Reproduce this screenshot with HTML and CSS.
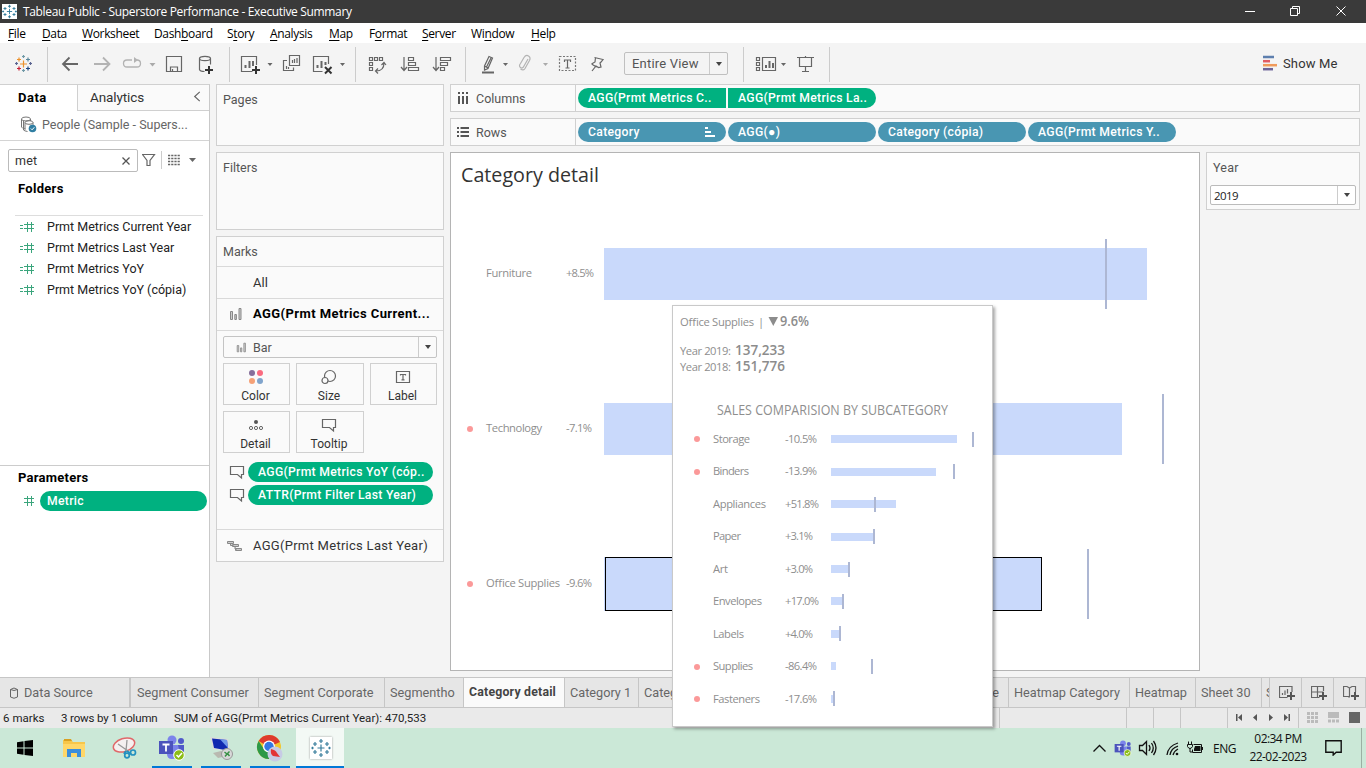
FILE: index.html
```html
<!DOCTYPE html>
<html lang="en">
<head>
<meta charset="utf-8">
<title>Tableau Public - Superstore Performance - Executive Summary</title>
<link rel="stylesheet" href="styles.css">
</head>
<body>
<svg class="defs" width="0" height="0">
  <defs>
    <symbol id="tip" viewBox="0 0 16 16"><path d="M1.5 2.5h13v8h-2v3.5l-4-3.500h-7z" fill="none" stroke="#666" stroke-width="1.2"/></symbol>
    <symbol id="hash" viewBox="0 0 16 12"><path d="M0 4.5h3M0 7.5h3M4 3.500h10M4 7.500h10M7.5 1v10M11.500 1v10" fill="none" stroke="#3aa57c"/></symbol>
    <symbol id="bars" viewBox="0 0 14 14"><path d="M1.5 4.5h2v8h-2zM5.8 7.5h1.6v5H5.8zM10 1.500h2v11h-2z" fill="#ccc" stroke="#888"/></symbol>
    <symbol id="plusmark" viewBox="0 0 10 10"><path d="M5 1v8M1 5h8" stroke="#555" stroke-width="2"/></symbol>
    <symbol id="teams" viewBox="0 0 28 26">
      <circle cx="14" cy="5" r="4.500" fill="#7b83eb"/><circle cx="23" cy="6" r="3" fill="#5059c9"/>
      <path d="M9 10h11v10q-1 4-6 4t-5-5z" fill="#7b83eb"/><path d="M20 10h6v8q-1 3-5 3z" fill="#5059c9"/>
      <rect x="1" y="6" width="14" height="13" fill="#4b53bc"/><path d="M4.500 9.500h7M8 9.500v7" stroke="#fff" stroke-width="1.800"/>
      <circle cx="21" cy="20" r="5.300" fill="#8cbd18" stroke="#fff"/><path d="M18.500 20l2 2 3.500-4" fill="none" stroke="#fff" stroke-width="1.500"/>
    </symbol>
    <symbol id="tabmark" viewBox="0 0 20 20"><path d="M10 6.500v7M6.500 10h7M10 1v4M8 3h4M10 15v4M8 17h4M4 4v4M2 6h4M16 4v4M14 6h4M4 12v4M2 14h4M16 12v4M14 14h4M1.500 8.700v2.600M.200 10h2.600M18.500 8.700v2.600M17.200 10h2.600" fill="none" stroke="currentColor" stroke-width="1.200"/></symbol>
  </defs>
</svg>
<div class="app">
  <header class="titlebar">
    <span class="logo"><svg width="15" height="15"><use href="#tabmark"/></svg></span>
    <span class="title">Tableau Public - Superstore Performance - Executive Summary</span>
    <svg class="winctl" width="116" height="23" viewBox="1240 0 116 23"><g fill="none" stroke="#fff"><path d="M1245 11.500h10M1290.500 8.500h7v7h-7zM1292.500 8.500v-2h7v7h-2M1336.500 6.500l9 9M1345.500 6.500l-9 9"/></g></svg>
  </header>
  <nav class="menubar">
    <span><u>F</u>ile</span><span><u>D</u>ata</span><span><u>W</u>orksheet</span><span>Dash<u>b</u>oard</span><span>S<u>t</u>ory</span><span><u>A</u>nalysis</span><span><u>M</u>ap</span><span>F<u>o</u>rmat</span><span><u>S</u>erver</span><span>Wi<u>n</u>dow</span><span><u>H</u>elp</span>
  </nav>
  <div class="toolbar">
    <div class="group g1"><svg width="47" height="35" viewBox="0 47 47 35"><g fill="none" stroke-width="1.200">
      <path d="M20 64h7M23.500 60.500v7" stroke="#eb912c"/><path d="M17 59.500h4M19 57.500v4" stroke="#eb912c"/><path d="M17 68.500h4M19 66.500v4" stroke="#c72035"/><path d="M26 59.500h4M28 57.500v4" stroke="#59879b"/><path d="M26 68.500h4M28 66.500v4" stroke="#1f457e"/><path d="M22 56.500h3M23.500 55v3M22 70.500h3M23.500 69v3" stroke="#7099a6"/><path d="M15 63.500h3M16.500 62v3M29 63.500h3M30.500 62v3" stroke="#5b6591"/></g></svg></div>
    <div class="group g2"><svg width="182" height="35" viewBox="48 47 182 35"><g fill="none" stroke="#666" stroke-width="1.200">
      <path d="M78 64H63M69.500 57.500L63 64l6.500 6.500" stroke-width="1.800"/><path d="M94 64h15M103 57.500l6.500 6.500-6.500 6.500" stroke="#b3b3b3" stroke-width="1.800"/>
      <path d="M132 60h-5q-3.500 0-3.500 3.500t3.500 3.500h10q3.500 0 3.500-3.500T137 60" stroke="#b3b3b3" stroke-width="1.300"/><path d="M134 57v6l4-3z" fill="#b3b3b3" stroke="none"/>
      <path d="M149.500 63h6l-3 3.500z" fill="#aaa" stroke="none"/>
      <path d="M166.500 56.500h15v15h-15zM170.500 71.500v-4.500h7v4.500M172.500 69v2.500"/>
      <ellipse cx="205" cy="58.500" rx="5.500" ry="2.200"/><path d="M199.500 58.500v11q.500 2 5 2M210.500 58.500v6"/><path d="M209 66v8M205 70h8" stroke="#333" stroke-width="2"/></g></svg></div>
    <div class="group g3"><svg width="125" height="35" viewBox="230 47 125 35"><g fill="none" stroke="#666" stroke-width="1.200">
      <path d="M256.500 65v-8.500h-15v15h11"/><path d="M245.500 68v-3M249.500 68v-7M253 66v-5" stroke-width="2"/><path d="M256 66v8M252 70h8" stroke="#333" stroke-width="2"/><path d="M267.500 63h5l-2.500 3zM340 63h5l-2.500 3z" fill="#666" stroke="none"/>
      <path d="M289.500 55.500h10v10h-10zM287 60.500h-3.500v10h10v-3M292.500 63v-3M294.500 63v-4M297 63v-5M286.500 69v-3M288.500 69v-2"/>
      <path d="M328.500 64v-7.500h-15v15h9"/><path d="M317.500 68v-3M321.500 68v-7M325.500 65v-3" stroke-width="2"/><path d="M325 67l6.500 6.500M331.500 67l-6.500 6.500" stroke="#333" stroke-width="2"/></g></svg></div>
    <div class="group g4"><svg width="109" height="35" viewBox="356 47 109 35"><g fill="none" stroke="#666" stroke-width="1.200">
      <path d="M369.500 57.500h3v3h-3zM374.500 57.500h3v3h-3zM379.500 57.500h3v3h-3zM369.500 62.500h3v3h-3zM369.500 67.500h3v3h-3zM376 71q8 0 8-8M381.500 65l2.500-2.500 2 2.500M378 68.500l-2.500 2.500 2.500 2.500"/>
      <path d="M404 57v13M401 67l3 3.500 3-3.500M408.500 57.500h5v3h-5zM408.500 62.500h7v3h-7zM408.500 67.500h10v3h-10z"/>
      <path d="M436 57v13M433 67l3 3.500 3-3.500M440.500 57.500h10v3h-10zM440.500 62.500h7v3h-7zM440.500 67.500h4v3h-4z"/></g></svg></div>
    <div class="group g5"><svg width="158" height="35" viewBox="466 47 158 35"><g fill="none" stroke="#666" stroke-width="1.200">
      <path d="M489 56.500l3.500 1.500-4.500 10.500-3.500 1.500v-4zM484.500 66l3.500 2M491 58l-4.500 9"/><path d="M482 72.500h12" stroke-width="2"/><path d="M503 63h5l-2.500 3z" fill="#666" stroke="none"/>
      <path d="M528 59l-4 7q-1.500 3-3.500 1.500t0-4l3.500-6q2-3 4.500-1.500t1 4.500l-4.500 8q-1.500 2.500-4.500.500" stroke="#b3b3b3"/><path d="M543 63h5l-2.500 3z" fill="#aaa" stroke="none"/>
      <rect x="559.500" y="56.500" width="16" height="14" stroke-dasharray="2 1.500" stroke="#777"/><path d="M564.500 62v-2h6v2M567.500 60v8M565.500 68h4"/>
      <path d="M594.500 57.500l8.500 2-2 2.500-1 1 1 4-2.500.500-2.500-1.500-4 5M591.500 64l5 3M591.500 64l3.500-2 .500-4.500"/></g></svg>
      <div class="fitbox"><span>Entire View</span><i></i></div></div>
    <div class="group g6"><svg width="85" height="35" viewBox="744 47 85 35"><g fill="none" stroke="#666" stroke-width="1.200">
      <path d="M756.500 57.500h3v3h-3zM756.500 62.500h3v3h-3zM756.500 67.500h3v3h-3zM762.500 57.500h13v13h-13z"/><path d="M766 68v-3M769.500 68v-7M773 68v-5" stroke-width="2"/><path d="M781 63h5l-2.500 3z" fill="#666" stroke="none"/><path d="M797 57.500h17M799.500 57.500v9h12v-9M805.500 56v1M805.500 67v4M802 71.500h7"/></g></svg></div>
    <div class="showme"><svg width="16" height="16"><path d="M0 2h11" stroke="#5d7fae" stroke-width="2.500"/><path d="M0 6.200h7" stroke="#e15b64" stroke-width="2.500"/><path d="M0 10.200h14" stroke="#f09a5b" stroke-width="2.500"/><path d="M0 14.200h10" stroke="#6d6398" stroke-width="2.500"/></svg>Show Me</div>
  </div>
  <main class="main">
    <aside class="side">
      <div class="sidetabs"><b>Data</b><span>Analytics</span><svg width="8" height="12" viewBox="0 0 8 12"><path d="M7 1L1.500 6 7 11" fill="none" stroke="#666" stroke-width="1.300"/></svg></div>
      <div class="source"><svg width="17" height="17"><g fill="none" stroke="#777"><ellipse cx="6" cy="3" rx="4.500" ry="2"/><path d="M1.500 3v8q1 2 4 2M3.500 5v9q1 1 4 1.500M10.500 3v2"/><ellipse cx="9" cy="6.500" rx="4" ry="1.800"/><path d="M5 6.500v7M13 6.500v3"/></g><circle cx="12.500" cy="12.500" r="3.800" fill="#2f7ea2"/><path d="M10.800 12.500l1.300 1.300 2.200-2.500" fill="none" stroke="#fff"/></svg><span>People (Sample - Supers...</span></div>
      <div class="search"><div class="searchbox"><span>met</span><svg width="8" height="8"><path d="M.500.500l7 7M7.500.500l-7 7" stroke="#555" stroke-width="1.300"/></svg></div>
        <svg class="tools" width="58" height="20" viewBox="142 150 58 20"><path d="M142.500 154.500h12l-4.500 6v5h-3v-5z" fill="none" stroke="#666" stroke-width="1.200"/><path d="M161.500 151v18" stroke="#ccc"/><path d="M168 155.500h12M168 158.500h12M168 161.500h12M168 164.500h12" stroke="#666" stroke-width="1.400" stroke-dasharray="2.200 1"/><path d="M189 158h7l-3.500 4z" fill="#666"/></svg></div>
      <h3 class="folders">Folders</h3>
      <ul class="fields">
        <li><svg width="16" height="12"><use href="#hash"/></svg>Prmt Metrics Current Year</li>
        <li><svg width="16" height="12"><use href="#hash"/></svg>Prmt Metrics Last Year</li>
        <li><svg width="16" height="12"><use href="#hash"/></svg>Prmt Metrics YoY</li>
        <li><svg width="16" height="12"><use href="#hash"/></svg>Prmt Metrics YoY (cópia)</li>
      </ul>
      <section class="params"><h3>Parameters</h3><div class="param"><svg width="12" height="12"><path d="M1 3.500h10M1 7.500h10M4.500 1v10M8.500 1v10" stroke="#3aa57c"/></svg><span class="pill green">Metric</span></div></section>
    </aside>
    <div class="shelves">
      <section class="card pages">Pages</section>
      <section class="card filters">Filters</section>
      <section class="card marks">
        <div class="mhead">Marks</div>
        <div class="mrow"><span>All</span></div>
        <div class="mrow bold"><svg width="14" height="14"><use href="#bars"/></svg><span>AGG(Prmt Metrics Current...</span></div>
        <div class="mbody">
          <div class="marktype"><svg width="11" height="11"><use href="#bars"/></svg><span>Bar</span><i></i></div>
          <div class="markbtns">
            <div><svg width="16" height="16"><circle cx="4" cy="4" r="3" fill="#866f9b"/><circle cx="12" cy="4" r="3" fill="#fa6b80"/><circle cx="4" cy="12" r="3" fill="#f5a177"/><circle cx="12" cy="12" r="3" fill="#80a4cc"/></svg>Color</div>
            <div><svg width="16" height="16"><g fill="#fafafa" stroke="#666" stroke-width="1.200"><circle cx="9" cy="7" r="5.500"/><circle cx="4" cy="11.500" r="3"/></g></svg>Size</div>
            <div><svg width="16" height="16"><path d="M1.500 2.500h13v11h-13zM5.500 6.500v-1h5v1M8 5.500v5M6.500 10.800h3" fill="none" stroke="#666" stroke-width="1.200"/></svg>Label</div>
            <div><svg width="16" height="16"><circle cx="8" cy="5" r="2" fill="#555"/><g fill="none" stroke="#666"><circle cx="3" cy="11" r="1.600"/><circle cx="8" cy="11" r="1.600"/><circle cx="13" cy="11" r="1.600"/></g></svg>Detail</div>
            <div><svg width="16" height="16"><use href="#tip"/></svg>Tooltip</div>
          </div>
          <div class="markpill"><svg width="16" height="16"><use href="#tip"/></svg><span class="pill green">AGG(Prmt Metrics YoY (cóp..</span></div>
          <div class="markpill"><svg width="16" height="16"><use href="#tip"/></svg><span class="pill green">ATTR(Prmt Filter Last Year)</span></div>
        </div>
        <div class="mrow last"><svg width="16" height="12"><path d="M.500 1.500h6v2h-6zM5.500 4.500h6v2h-6zM8.500 8.500h6v2h-6zM3.500 3.500v2h3M8 6.500v2.500h2" fill="#ccc" stroke="#888"/></svg><span>AGG(Prmt Metrics Last Year)</span></div>
      </section>
    </div>
    <div class="work">
      <div class="shelf"><div class="slabel"><svg width="12" height="12"><path d="M2 0v2M6 0v2M10 0v2M2 4v8M6 4v8M10 4v8" stroke="#555" stroke-width="2"/></svg>Columns</div><span class="pill green joinr">AGG(Prmt Metrics C..</span><span class="pill green joinl">AGG(Prmt Metrics La..</span></div>
      <div class="shelf"><div class="slabel"><svg width="12" height="12"><path d="M0 2h2M0 6h2M0 10h2M3.500 2H12M3.500 6H12M3.500 10H12" stroke="#555" stroke-width="1.800"/></svg>Rows</div><span class="pill blue">Category<svg width="10" height="10"><path d="M0 1h3M0 5h6M0 9h10" stroke="#fff" stroke-width="1.800"/></svg></span><span class="pill blue">AGG(●)</span><span class="pill blue">Category (cópia)</span><span class="pill blue">AGG(Prmt Metrics Y..</span></div>
      <div class="canvas">
        <section class="view"><svg class="chart" width="748" height="517" viewBox="451 153 748 517">
          <text class="ctitle" x="461" y="182" textLength="138" lengthAdjust="spacingAndGlyphs">Category detail</text>
          <g class="bar"><rect x="604" y="248" width="543" height="52"/><rect x="604" y="403" width="518" height="52"/><rect x="604" y="557" width="437" height="54"/></g>
          <rect x="605.500" y="557.500" width="436" height="53" fill="none" stroke="#000"/>
          <path class="refline" d="M1106 239v70M1163 394v70M1088 549v70"/>
          <g class="dot"><circle cx="470" cy="429" r="3"/><circle cx="470" cy="584" r="3"/></g>
          <g class="lab"><text x="486" y="277" textLength="46">Furniture</text><text x="566" y="277" textLength="28">+8.5%</text><text x="486" y="432" textLength="56">Technology</text><text x="566" y="432" textLength="26">-7.1%</text><text x="486" y="587" textLength="74">Office Supplies</text><text x="566" y="587" textLength="26">-9.6%</text></g>
        </svg></section>
        <aside class="card year"><div>Year</div><div class="yearsel"><span>2019</span><i></i></div></aside>
      </div>
    </div>
  </main>
  <div class="tabs">
    <div class="tab t0"><svg width="8" height="12"><path d="M.500 2.500q3.500-3 7 0v7.500q-3.500 2.500-7 0zM.500 2.500q3.500 2 7 0" fill="none" stroke="#666"/></svg>Data Source</div>
    <div class="tab t1">Segment Consumer</div><div class="tab t2">Segment Corporate</div><div class="tab t3">Segmentho</div><div class="tab active">Category detail</div><div class="tab t5">Category 1</div><div class="tab t6"><span>Categ</span><span>e</span></div><div class="tab t7">Heatmap Category</div><div class="tab t8">Heatmap</div><div class="tab t9">Sheet 30</div><div class="tab t10">S</div>
    <div class="tab add"><svg width="16" height="16"><path d="M13 7V1.500H.500v11h8M3.500 10V8M6 10V5.500M8.500 8.500V4" fill="none" stroke="#666" stroke-width="1.200"/><use href="#plusmark" x="7" y="6" width="10" height="10"/></svg></div>
    <div class="tab add"><svg width="16" height="16"><path d="M12.500 6V1.500H.500v11h8M6.500 1.500v11M.500 7h12" fill="none" stroke="#666" stroke-width="1.200"/><use href="#plusmark" x="7" y="6" width="10" height="10"/></svg></div>
    <div class="tab add"><svg width="16" height="16"><path d="M6.500 3L4 1.500H.500v10h5l1 1M6.500 3v9M6.500 3L9 1.500h3.500V7" fill="none" stroke="#666" stroke-width="1.200"/><use href="#plusmark" x="7" y="6" width="10" height="10"/></svg></div>
  </div>
  <footer class="status"><span class="s1">6 marks</span><span class="s2">3 rows by 1 column</span><span class="s3">SUM of AGG(Prmt Metrics Current Year): 470,533</span>
    <svg class="statusnav" width="367" height="20" viewBox="999 708 367 20"><path d="M999.500 708v20M1126.500 708v20M1153.500 708v20M1180.500 708v20M1227.500 708v20M1298.500 708v20" stroke="#c6c6c6"/><path d="M1236 714h1.500v7h-1.500zM1242 714v7l-4-3.500zM1257 714v7l-4-3.500zM1269 714v7l4-3.500zM1284 714v7l4-3.500zM1288.500 714h1.500v7h-1.500z" fill="#555"/><path d="M1307 713.500h11M1307 717.500h11M1307 721.500h11" stroke="#bbb" stroke-width="3" stroke-dasharray="3 1"/><path d="M1328 712h11v6h-11zM1328 719.500h3v3h-3zM1332 719.500h3v3h-3zM1336 719.500h3v3h-3z" fill="#bbb"/><path d="M1349 712h11v11h-11z" fill="#666"/></svg></footer>
  <div class="taskbar">
    <div class="tb"><svg width="16" height="16"><path d="M0 2.300L6.500 1.300V7.500H0zM7.500 1.100L16 0v7.500H7.500zM0 8.500h6.500v6.200L0 13.700zM7.500 8.500H16V16l-8.500-1.100z"/></svg></div>
    <div class="tb"><svg width="22" height="19"><path d="M0 1h8l2 2h12v15H0z" fill="#f7c64a"/><path d="M1 0h7l1 2H1z" fill="#d9a021"/><path d="M0 5h22v13H0z" fill="#ffd768"/><path d="M4 10h14v8h-4v-4H8v4H4z" fill="#3b8edb"/></svg></div>
    <div class="tb snip"><svg width="25" height="22"><ellipse cx="12" cy="8" rx="11" ry="6.500" fill="#f5f0f0" stroke="#e0686a" stroke-width="1.500" transform="rotate(-18 12 8)"/><path d="M6 7l10 7M15 3l-1 11" stroke="#999" stroke-width="1.300"/><path d="M14 14l-2 3M15 14l4 3" stroke="#2491c0" stroke-width="2"/><circle cx="15" cy="18.500" r="2.300" fill="none" stroke="#2491c0" stroke-width="1.700"/><circle cx="21" cy="15.500" r="2.500" fill="none" stroke="#2491c0" stroke-width="1.700"/></svg></div>
    <div class="tb run"><svg width="28" height="26"><use href="#teams"/></svg></div>
    <div class="tb run"><svg width="25" height="26"><path d="M1 2l18 2 2 13L4 14z" fill="#dcdcdc"/><path d="M3 3.500l15 1.500 1 10.500L5 13z" fill="#1028b0"/><path d="M11 4.300l7 .700 1 8z" fill="#6f97ea"/><path d="M4 18l8-2 6 5-9 2z" fill="#b9b9b0"/><circle cx="18" cy="19" r="5.500" fill="#d8d8d8" stroke="#999"/><path d="M15.500 17l2.500 2-2 2.500M20.500 16.500l-2 2 2 2.500" fill="none" stroke="#389145" stroke-width="1.500"/></svg></div>
    <div class="tb run"><svg width="28" height="28"><circle cx="13" cy="13" r="12" fill="#f3c72f"/><path d="M13 13L2.600 7A12 12 0 0 1 24 8z" fill="#de3b2d"/><path d="M13 13v12A12 12 0 0 1 2.600 7l6 9z" fill="#2d9948"/><circle cx="13" cy="12.500" r="6" fill="#fff"/><circle cx="13" cy="12.500" r="4.700" fill="#3478e4"/><circle cx="19" cy="20" r="7.500" fill="#c7cbe5"/><path d="M15 15q5 1 6 4l3 4-7-1q-3-2-2-7" fill="#e23437"/></svg></div>
    <div class="tb run current"><span class="tabicon"><svg width="20" height="20"><use href="#tabmark"/></svg></span></div>
    <svg class="tray" width="123" height="40" viewBox="1090 728 123 40"><g fill="none" stroke="#111" stroke-width="1.300"><path d="M1093.500 751.500l6-6 6 6"/><path d="M1139.500 745.500h3l4-4v13l-4-4h-3zM1149 745q2 3 0 6M1151.500 743q3.500 5 0 10M1153.500 741q5 7 0 14"/><path d="M1167 755q1-9 11-12M1170 755q1-7 8-9M1173 755q1-4 5-6"/><circle cx="1177" cy="754" r="1.300" fill="#111" stroke="none"/></g><svg x="1114" y="740" width="18" height="17"><use href="#teams"/></svg><path d="M1193.500 744.500h8v8h-9v-3M1202.500 747v3" fill="none" stroke="#111"/><path d="M1195 746h5.500v5h-6.500v-2z" fill="#111"/><path d="M1188.500 741.500v3M1191.500 741.500v3M1187.500 744.500h5v2q-1 2-2.500 2t-2.500-2zM1190 748v4h2" stroke="#111" fill="none"/></svg>
    <span class="lang">ENG</span><div class="clock"><span>02:34 PM</span><span>22-02-2023</span></div>
    <svg class="note" width="17" height="16"><path d="M.800.800h15.400v11.400h-5l-3 2.800v-2.800h-7.400z" fill="none" stroke="#111" stroke-width="1.400"/></svg><i class="desk"></i>
  </div>
  <div class="tooltip"><svg class="chart" width="319" height="420" viewBox="673 306 319 420">
    <g class="lab"><text x="680" y="326" textLength="74">Office Supplies</text><text x="758" y="326">|</text><text x="680" y="355" textLength="51">Year 2019:</text><text x="680" y="371" textLength="51">Year 2018:</text></g>
    <path d="M768.500 317h9.500l-4.700 9z" fill="#8c8c8c"/>
    <g class="strong"><text x="780" y="326" textLength="29" lengthAdjust="spacingAndGlyphs">9.6%</text><text x="735" y="355" textLength="50" lengthAdjust="spacingAndGlyphs">137,233</text><text x="735" y="371" textLength="50" lengthAdjust="spacingAndGlyphs">151,776</text></g>
    <text class="sub" x="717" y="415" textLength="231" lengthAdjust="spacingAndGlyphs">SALES COMPARISION BY SUBCATEGORY</text>
    <g class="dot"><circle cx="697" cy="439" r="3"/><circle cx="697" cy="472" r="3"/><circle cx="697" cy="667" r="3"/><circle cx="697" cy="699" r="3"/></g>
    <g class="lab"><text x="713" y="443" textLength="37">Storage</text><text x="713" y="475" textLength="36">Binders</text><text x="713" y="508" textLength="53">Appliances</text><text x="713" y="540" textLength="28">Paper</text><text x="713" y="573" textLength="15">Art</text><text x="713" y="605" textLength="49">Envelopes</text><text x="713" y="638" textLength="31">Labels</text><text x="713" y="670" textLength="40">Supplies</text><text x="713" y="703" textLength="47">Fasteners</text>
    <text x="785" y="443" textLength="32">-10.5%</text><text x="785" y="475" textLength="32">-13.9%</text><text x="785" y="508" textLength="34">+51.8%</text><text x="785" y="540" textLength="28">+3.1%</text><text x="785" y="573" textLength="28">+3.0%</text><text x="785" y="605" textLength="34">+17.0%</text><text x="785" y="638" textLength="28">+4.0%</text><text x="785" y="670" textLength="32">-86.4%</text><text x="785" y="703" textLength="32">-17.6%</text></g>
    <g class="bar"><rect x="831" y="435" width="126" height="8"/><rect x="831" y="468" width="105" height="8"/><rect x="831" y="500" width="65" height="8"/><rect x="831" y="533" width="43" height="8"/><rect x="831" y="565" width="18" height="8"/><rect x="831" y="597" width="12" height="8"/><rect x="831" y="630" width="9" height="8"/><rect x="831" y="662" width="5" height="8"/><rect x="831" y="695" width="3" height="8"/></g>
    <path class="refline" d="M973 432v15M954 464v15M875 497v15M874 529v15M849 562v15M843 594v15M840 626v15M872 659v15M834 691v15"/>
  </svg></div>
</div>
</body>
</html>
```
FILE: styles.css
```css
* { box-sizing: border-box; }
body { margin: 0; overflow: hidden; }
h3, ul { margin: 0; padding: 0; font: inherit; list-style: none; }
svg { display: block; flex: none; }
.defs { position: absolute; }
.app { position: relative; width: 1366px; height: 768px; display: flex; flex-direction: column; background: #f4f4f4; color: #333; font-family: Roboto, sans-serif; font-size: 12.5px; white-space: nowrap; overflow: hidden; }

.titlebar { height: 23px; flex: none; display: flex; align-items: center; padding: 0 10px 0 2px; background: #3a3a3a; color: #fff; font: 12px "Open Sans", sans-serif; letter-spacing: -0.34px; }
.logo { width: 15px; height: 15px; background: #fff; color: #2c7898; margin-right: 6px; }
.winctl { margin-left: auto; }
.menubar { height: 20px; flex: none; display: grid; grid-template-columns: 34px 40px 72px 73px 43px 59px 40px 53px 49px 60px 30px; align-items: center; padding: 1px 0 0 8px; background: #fff; color: #000; font: 12px "Open Sans", sans-serif; letter-spacing: -0.35px; }
.menubar u { text-underline-offset: 2px; }
.toolbar { height: 41px; flex: none; display: flex; padding: 4px 0 2px; }
.group { display: flex; border-right: 1px solid #ccc; }
.g1 { width: 48px; } .g2 { width: 182px; } .g3 { width: 126px; } .g4 { width: 110px; } .g5 { width: 278px; } .g6 { width: 86px; }
.fitbox { width: 104px; height: 23px; margin-top: 5px; border: 1px solid #c0c0c0; border-radius: 2px; display: flex; align-items: center; padding-left: 7px; font-size: 13px; letter-spacing: .2px; color: #555; }
.fitbox i, .marktype i, .yearsel i { margin-left: auto; width: 18px; height: 100%; border-left: 1px solid #ccc; display: flex; align-items: center; justify-content: center; }
.fitbox i::after, .marktype i::after, .yearsel i::after { content: ""; border: 3.5px solid transparent; border-top: 4px solid #444; border-bottom: 0; }
.showme { display: flex; align-items: center; gap: 4px; margin-left: 433px; padding-bottom: 3px; font-size: 13px; letter-spacing: .15px; }

.main { height: 593px; flex: none; display: flex; }
.side { width: 210px; border-right: 1px solid #c9c9c9; border-top: 1px solid #d0d0d0; background: #fff; display: flex; flex-direction: column; }
.sidetabs { height: 26px; display: flex; color: #333; font-size: 13.5px; line-height: 25px; }
.sidetabs b { width: 77px; padding-left: 18px; color: #000; font-size: 13px; letter-spacing: .5px; }
.sidetabs span { width: 116px; height: 26px; padding-left: 12px; border-left: 1px solid #d0d0d0; border-bottom: 1px solid #d0d0d0; background: #fafafa; letter-spacing: -.1px; }
.sidetabs svg { width: 16px; height: 26px; padding: 6px 8px 8px 0; border-bottom: 1px solid #d0d0d0; background: #fafafa; }
.source { height: 30px; border-bottom: 1px solid #d4d4d4; display: flex; align-items: center; gap: 5px; padding: 0 0 2px 20px; color: #666; }
.search { display: flex; height: 38px; padding: 8px 0 0 8px; gap: 4px; }
.searchbox { width: 130px; height: 23px; border: 1px solid #bbb; border-radius: 2px; display: flex; align-items: center; justify-content: space-between; padding: 0 7px 0 6px; letter-spacing: .2px; }
.search .tools { margin-top: 1px; }
.folders { height: 37px; margin: 0 6px 0 15px; padding: 1px 3px 0; border-bottom: 1px solid #ddd; font-weight: 700; font-size: 13px; line-height: 17px; letter-spacing: .3px; color: #000; }
.fields li { height: 21px; display: flex; align-items: center; padding-left: 20px; gap: 11px; color: #222; }
.params { margin-top: auto; height: 212px; border-top: 1px solid #ccc; padding-top: 3px; }
.params h3 { padding-left: 18px; font-weight: 700; font-size: 13px; line-height: 17px; letter-spacing: .25px; color: #000; }
.param { display: flex; align-items: center; padding: 5px 0 0 23px; gap: 5px; }
.param .pill { width: 167px; padding-left: 7px; }
.pill { height: 20px; border-radius: 10px; display: flex; align-items: center; justify-content: space-between; padding: 0 11px 0 10px; color: #fff; font-weight: 500; font-size: 12.2px; letter-spacing: .3px; }
.green { background: #00b180; } .blue { background: #4996b2; }

.shelves { width: 228px; margin-left: 6px; display: flex; flex-direction: column; gap: 6px; }
.card { border: 1px solid #d0d0d0; background: #fafafa; color: #555; }
.pages { height: 62px; padding: 7px 6px; } .filters { height: 78px; padding: 7px 6px; } .marks { height: 326px; }
.mhead { height: 29px; padding: 7px 6px; }
.mrow { height: 32px; border-top: 1px solid #d9d9d9; display: flex; align-items: center; padding-left: 12px; font-size: 13px; color: #333; }
.mrow span { margin-left: 24px; } .mrow svg + span { margin-left: 10px; }
.mrow.bold { font-weight: 700; color: #000; letter-spacing: .42px; padding-bottom: 2px; }
.mrow.last { padding-left: 10px; } .mrow.last span { letter-spacing: .28px; }
.mbody { height: 199px; border-top: 1px solid #d9d9d9; padding: 5px 6px 0; }
.marktype { height: 22px; border: 1px solid #c4c4c4; border-radius: 2px; display: flex; align-items: center; padding-left: 12px; gap: 6px; }
.markbtns { display: grid; grid-template-columns: 67px 68px 67px; gap: 6px; margin-top: 5px; }
.markbtns div { height: 42px; border: 1px solid #d0d0d0; display: flex; flex-direction: column; align-items: center; padding: 5px 2px 0 0; gap: 3px; color: #333; font-size: 12px; line-height: 16px; }
.markpill { display: flex; align-items: center; padding-left: 6px; margin-top: 9px; gap: 3px; }
.markpill + .markpill { margin-top: 3px; }
.markpill .pill { width: 185px; }

.work { margin-left: 6px; flex: 1; }
.shelf { width: 910px; height: 28px; margin-bottom: 6px; border: 1px solid #d0d0d0; background: #fafafa; display: flex; align-items: center; gap: 2px; }
.slabel { width: 125px; height: 26px; border-right: 1px solid #d0d0d0; display: flex; align-items: center; gap: 7px; padding-left: 6px; color: #555; }
.shelf .pill { width: 148px; }
.shelf .joinr { border-radius: 10px 0 0 10px; } .shelf .joinl { border-radius: 0 10px 10px 0; }
.canvas { display: flex; gap: 6px; }
.view { width: 750px; height: 519px; border: 1px solid #b4b4b4; background: #fff; }
.year { width: 154px; height: 58px; padding: 7px 3px 0; }
.year > div:first-child { padding-left: 3px; line-height: 15px; letter-spacing: .2px; }
.yearsel { height: 20px; margin-top: 10px; border: 1px solid #bbb; border-radius: 2px; background: #fff; display: flex; align-items: center; padding-left: 3px; font: 11.5px "Open Sans", sans-serif; letter-spacing: -.6px; color: #222; }

.chart text { font-family: "Open Sans", sans-serif; fill: #8e8e8e; }
.chart .ctitle { font-size: 20.5px; fill: #333; }
.chart .lab text { font-size: 11.2px; }
.chart .strong text { font-size: 13.5px; font-weight: 600; fill: #8c8c8c; }
.chart .sub { font-size: 14px; font-weight: 500; }
.bar { fill: #c9d9fb; } .dot { fill: #fb9999; } .refline { stroke: #adb7d3; stroke-width: 2; }

.tabs { height: 31px; flex: none; display: flex; background: #e6e6e6; border-top: 1px solid #c6c6c6; border-bottom: 1px solid #c6c6c6; color: #666; font-size: 12.7px; }
.tab { flex: none; display: flex; align-items: center; padding-left: 5px; border-right: 1px solid #c6c6c6; overflow: hidden; }
.t0 { width: 131px; padding-left: 10px; gap: 6px; border-right-width: 2px; } .t1 { width: 128px; padding-left: 6px; } .t2 { width: 126px; } .t3 { width: 79px; }
.active { width: 101px; background: #fafafa; color: #444; font-weight: 700; font-size: 12.3px; letter-spacing: .2px; padding-bottom: 2px; } .t5 { width: 74px; }
.t6 { width: 370px; justify-content: space-between; padding-right: 9px; } .t7 { width: 121px; } .t8 { width: 66px; } .t9 { width: 66px; } .t10 { width: 8px; padding-left: 4px; } .add { width: 32px; padding-left: 9px; }
.status { height: 20px; flex: none; display: flex; align-items: center; padding-left: 3px; background: #eaeaea; font-size: 11.5px; letter-spacing: .03px; color: #222; }
.s1 { width: 58px; } .s2 { width: 113px; letter-spacing: -.15px; } .statusnav { margin-left: auto; }
.taskbar { height: 40px; flex: none; display: flex; align-items: center; background: #cbe8d7; color: #111; font: 12px "Open Sans", sans-serif; }
.tb { width: 49px; height: 40px; display: flex; align-items: center; justify-content: center; }
.snip { padding-left: 4px; }
.run { background: linear-gradient(#0078d7, #0078d7) center bottom / 40px 2px no-repeat; padding-left: 1px; }
.tb.current { width: 48px; margin-left: 2px; background: linear-gradient(#0078d7, #0078d7) center bottom / 48px 2px no-repeat #f3f9f5; }
.tabicon { padding: 1px; background: #fff; color: #377d9c; box-shadow: 0 0 2px #999; }
.tray { margin-left: auto; }
.lang { width: 36px; letter-spacing: -.5px; }
.clock { width: 58px; display: flex; flex-direction: column; align-items: center; line-height: 18px; letter-spacing: -.55px; margin-right: 18px; }
.note { margin-right: 19px; }
.desk { width: 5px; height: 40px; border-left: 1px solid #9bb0a3; }
.tooltip { position: absolute; left: 672px; top: 305px; width: 321px; height: 422px; background: #fff; border: 1px solid #c9c9c9; box-shadow: 2px 2px 3px rgba(0,0,0,.35); }
```
